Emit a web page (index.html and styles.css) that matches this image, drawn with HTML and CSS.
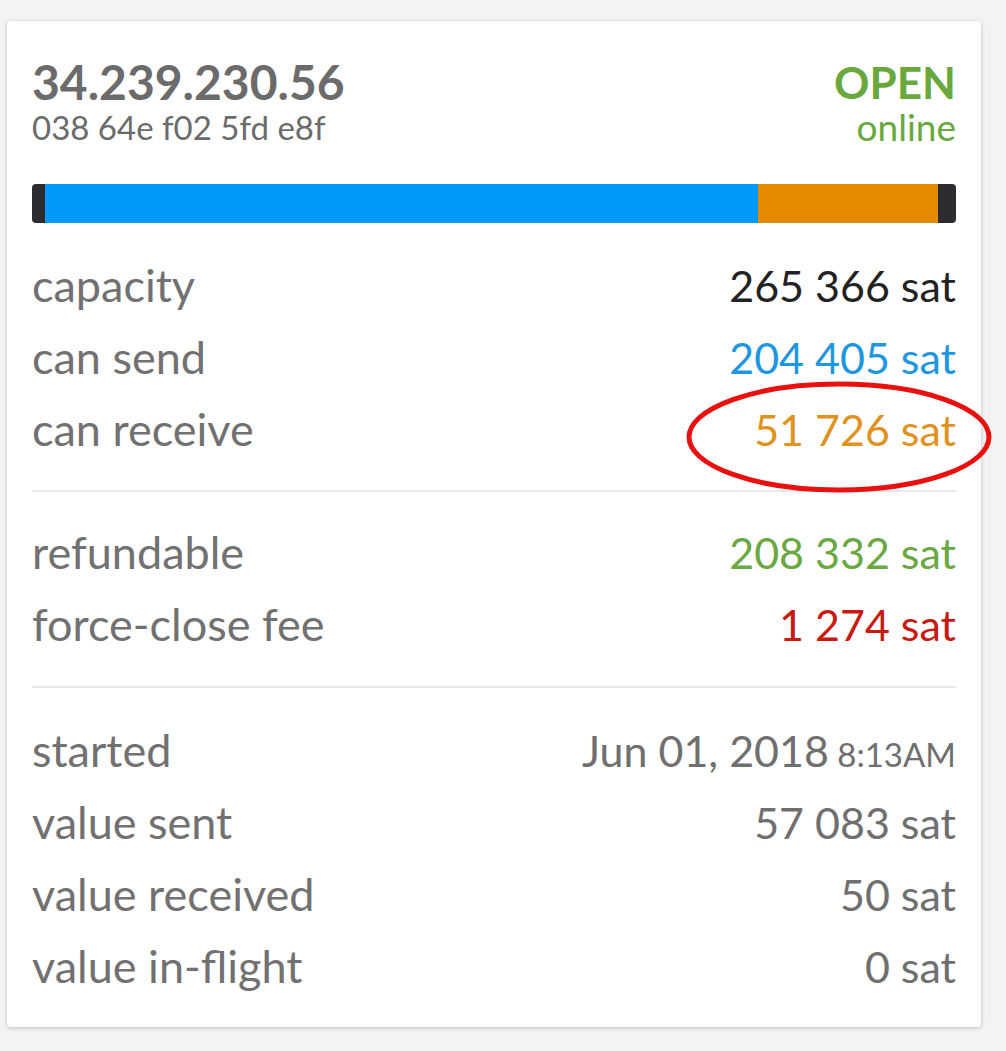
FILE: index.html
```html
<!DOCTYPE html>
<html>
<head>
<meta charset="utf-8">
<link rel="stylesheet" href="styles.css">
</head>
<body>
<div class="card">
  <div class="head">
    <div class="node">
      <div class="ip">34.239.230.56</div>
      <div class="pub">038 64e f02 5fd e8f</div>
    </div>
    <div class="state">
      <div class="open">OPEN</div>
      <div class="online">online</div>
    </div>
  </div>
  <div class="bar">
    <div class="seg dark" style="width:13px"></div>
    <div class="seg blue" style="width:713px"></div>
    <div class="seg orange" style="width:180px"></div>
    <div class="seg dark" style="width:18px"></div>
  </div>
  <div class="group first">
    <div class="row"><span class="lbl">capacity</span><span class="val black">265 366 sat</span></div>
    <div class="row"><span class="lbl">can send</span><span class="val blue-t">204 405 sat</span></div>
    <div class="row"><span class="lbl">can receive</span><span class="val orange-t mark">51 726 sat<svg class="ring" viewBox="0 0 306 112"><ellipse cx="153" cy="56" rx="150" ry="53" fill="none" stroke="#e8110f" stroke-width="5"/></svg></span></div>
  </div>
  <div class="group mid">
    <div class="row"><span class="lbl">refundable</span><span class="val green-t">208 332 sat</span></div>
    <div class="row"><span class="lbl">force-close fee</span><span class="val red-t">1 274 sat</span></div>
  </div>
  <div class="group last">
    <div class="row"><span class="lbl">started</span><span class="val">Jun 01, 2018<small> 8:13AM</small></span></div>
    <div class="row"><span class="lbl">value sent</span><span class="val">57 083 sat</span></div>
    <div class="row"><span class="lbl">value received</span><span class="val">50 sat</span></div>
    <div class="row"><span class="lbl">value in-flight</span><span class="val">0 sat</span></div>
  </div>
</div>
</body>
</html>
```

FILE: styles.css
```css
html, body {
  margin: 0;
  padding: 0;
  background: #f3f3f3;
}
body {
  font-family: Lato, "Open Sans", sans-serif;
  color: #6b6b6b;
  padding: 21px 0 0 7px;
  height: 1051px;
  box-sizing: border-box;
  overflow: hidden;
}
.card {
  width: 974px;
  box-sizing: border-box;
  background: #fff;
  border-radius: 4px;
  box-shadow: 0 1px 4px rgba(0,0,0,0.22);
  padding: 36px 25px 25px 25px;
}
.head {
  display: flex;
  justify-content: space-between;
  align-items: flex-start;
}
.ip {
  font-weight: 700;
  font-size: 48px;
  line-height: 50px;
  color: #6b6b6b;
}
.pub {
  font-size: 33px;
  line-height: 34px;
  margin-top: 3px;
  color: #6b6b6b;
}
.state {
  text-align: right;
}
.open {
  font-weight: 700;
  font-size: 44px;
  line-height: 50px;
  color: #69a83d;
}
.online {
  font-size: 37px;
  line-height: 34px;
  margin-top: 3px;
  color: #69a83d;
}
.bar {
  display: flex;
  height: 39px;
  margin-top: 40px;
  border-radius: 4px;
  overflow: hidden;
}
.seg.dark { background: #2a2c30; }
.seg.blue { background: #0099fb; }
.seg.orange { background: #e68a02; }
.group {
  border-bottom: 2px solid #e8e8e8;
}
.group.first { padding: 26px 0 25px; }
.group.mid { padding: 24px 0 26px; }
.group.last { border-bottom: none; padding: 26px 0 0; }
.row {
  display: flex;
  justify-content: space-between;
  align-items: baseline;
  height: 72px;
  line-height: 72px;
}
.lbl { color: #717171; font-size: 45px; }
.val { color: #6f6f6f; position: relative; font-size: 43px; }
.val small { font-size: 33px; }
.black { color: #222; }
.blue-t { color: #1e96e0; }
.orange-t { color: #df9220; }
.green-t { color: #6aa844; }
.red-t { color: #c81a12; }
.ring {
  position: absolute;
  right: -36px;
  top: -13px;
  width: 306px;
  height: 112px;
}
```
